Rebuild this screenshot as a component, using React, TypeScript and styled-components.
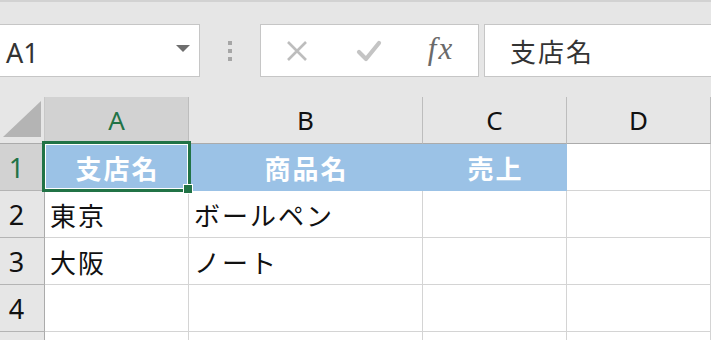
import React from 'react';
import styled, { createGlobalStyle } from 'styled-components';

const GlobalStyle = createGlobalStyle`
    html, body {
        margin: 0;
        padding: 0;
        background: #e6e6e6;
        overflow: hidden;
    }
    body {
        font-family: 'Noto Sans', 'Noto Sans CJK JP', sans-serif;
    }
`;

const Page = styled.div`
    width: 711px;
    height: 340px;
    overflow: hidden;
    box-sizing: border-box;
    border-top: 2px solid #d2d2d2;
    background: #e6e6e6;
`;

const Toolbar = styled.div`
    display: flex;
    height: 53px;
    margin: 22px -2px 20px -1px;
`;

const NameBox = styled.div`
    width: 201px;
    box-sizing: border-box;
    background: #fff;
    border: 1px solid #c6c6c6;
    display: flex;
    align-items: center;
    justify-content: space-between;
    padding: 4px 9px 0 6px;
    font-size: 27px;
    color: #333;
`;

const Arrow = styled.span`
    width: 0;
    height: 0;
    margin-top: -8px;
    border-left: 7px solid transparent;
    border-right: 7px solid transparent;
    border-top: 7px solid #6e6e6e;
`;

const Grip = styled.div`
    width: 60px;
    display: flex;
    flex-direction: column;
    align-items: center;
    justify-content: center;
    gap: 4px;
`;

const Dot = styled.span`
    width: 4px;
    height: 4px;
    background: #a6a6a6;
`;

const FxBox = styled.div`
    width: 219px;
    box-sizing: border-box;
    background: #fff;
    border: 1px solid #c6c6c6;
    display: flex;
`;

const Slot = styled.div`
    width: 72px;
    display: flex;
    align-items: center;
    justify-content: center;
`;

const Fx = styled.span`
    font-family: 'Liberation Serif', serif;
    font-style: italic;
    font-size: 31px;
    letter-spacing: 2px;
    color: #6a6a6a;
    margin-top: -3px;
`;

const FormulaBar = styled.div`
    flex: 1;
    margin-left: 5px;
    background: #fff;
    border: 1px solid #c6c6c6;
    display: flex;
    align-items: center;
    padding-left: 25px;
    font-family: 'Noto Sans CJK JP', sans-serif;
    font-size: 26px;
    letter-spacing: 2px;
    color: #333;
`;

const Sheet = styled.div`
    display: grid;
    grid-template-columns: 45px 144px 234px 144px 144px;
    grid-auto-rows: 47px;
    background: #fff;
`;

const Corner = styled.div`
    box-sizing: border-box;
    background: #e6e6e6;
    border-right: 1px solid #c8c8c8;
    border-bottom: 1px solid #ababab;
    svg {
        display: block;
    }
`;

const ColHeader = styled.div<{ $selected?: boolean }>`
    box-sizing: border-box;
    background: ${(p) => (p.$selected ? '#d2d2d2' : '#e6e6e6')};
    color: ${(p) => (p.$selected ? '#217346' : '#111')};
    border-right: 1px solid #bdbdbd;
    border-bottom: 1px solid #ababab;
    display: flex;
    align-items: center;
    justify-content: center;
    font-size: 26px;
`;

const RowHeader = styled.div<{ $selected?: boolean }>`
    box-sizing: border-box;
    background: ${(p) => (p.$selected ? '#d2d2d2' : '#e6e6e6')};
    color: ${(p) => (p.$selected ? '#217346' : '#111')};
    border-right: 1px solid #ababab;
    border-bottom: 1px solid #b4b4b4;
    display: flex;
    align-items: center;
    justify-content: center;
    padding-right: 11px;
    font-size: 27px;
`;

const Cell = styled.div<{ $fill?: boolean }>`
    position: relative;
    box-sizing: border-box;
    background: ${(p) => (p.$fill ? '#9bc2e6' : '#fff')};
    border-right: 1px solid ${(p) => (p.$fill ? '#9bc2e6' : '#d4d4d4')};
    border-bottom: 1px solid ${(p) => (p.$fill ? '#9bc2e6' : '#d4d4d4')};
    display: flex;
    align-items: center;
    justify-content: ${(p) => (p.$fill ? 'center' : 'flex-start')};
    padding-left: ${(p) => (p.$fill ? '2px' : '5px')};
    font-family: 'Noto Sans CJK JP', sans-serif;
    font-size: 26px;
    letter-spacing: 2px;
    font-weight: ${(p) => (p.$fill ? 700 : 400)};
    color: ${(p) => (p.$fill ? '#fff' : '#111')};
    white-space: nowrap;
`;

const Selection = styled.div`
    position: absolute;
    top: -3px;
    left: -3px;
    right: -3px;
    bottom: -2px;
    border: 3px solid #217346;
    box-shadow: inset 0 0 0 1px #fff;
    pointer-events: none;
    z-index: 2;
`;

const Handle = styled.span`
    position: absolute;
    right: -5px;
    bottom: -4px;
    width: 10px;
    height: 10px;
    box-sizing: border-box;
    background: #217346;
    border: 1px solid #fff;
    z-index: 3;
`;

const columns = ['A', 'B', 'C', 'D'];

// the last row is only a sliver at the bottom edge, its number is not in view
const rows: { cells: string[]; fill?: boolean; label?: string }[] = [
    { label: '1', cells: ['支店名', '商品名', '売上', ''], fill: true },
    { label: '2', cells: ['東京', 'ボールペン', '', ''] },
    { label: '3', cells: ['大阪', 'ノート', '', ''] },
    { label: '4', cells: ['', '', '', ''] },
    { cells: ['', '', '', ''] },
];

const fillCols = 3; // header fill runs A..C

export default function App() {
    return (
        <Page>
            <GlobalStyle />
            <Toolbar>
                <NameBox>
                    <span>A1</span>
                    <Arrow />
                </NameBox>
                <Grip>
                    <Dot />
                    <Dot />
                    <Dot />
                </Grip>
                <FxBox>
                    <Slot>
                        <svg width="22" height="20" viewBox="0 0 22 20">
                            <path d="M2 1 L20 19 M20 1 L2 19" stroke="#bdbdbd" strokeWidth="2.6" fill="none" />
                        </svg>
                    </Slot>
                    <Slot>
                        <svg width="26" height="22" viewBox="0 0 26 22">
                            <path
                                d="M3 12 L10 19 L23 3"
                                stroke="#c4c4c4"
                                strokeWidth="4.2"
                                strokeLinecap="round"
                                strokeLinejoin="round"
                                fill="none"
                            />
                        </svg>
                    </Slot>
                    <Slot>
                        <Fx>fx</Fx>
                    </Slot>
                </FxBox>
                <FormulaBar>支店名</FormulaBar>
            </Toolbar>
            <Sheet>
                <Corner>
                    <svg width="44" height="46" viewBox="0 0 44 46">
                        <polygon points="3,40 41,4 41,40" fill="#b4b4b4" />
                    </svg>
                </Corner>
                {columns.map((c, i) => (
                    <ColHeader key={c} $selected={i === 0}>
                        {c}
                    </ColHeader>
                ))}
                {rows.map((r, ri) => (
                    <React.Fragment key={ri}>
                        <RowHeader $selected={ri === 0}>{r.label}</RowHeader>
                        {r.cells.map((v, ci) => (
                            <Cell key={ci} $fill={r.fill && ci < fillCols}>
                                {v}
                                {ri === 0 && ci === 0 && (
                                    <>
                                        <Selection />
                                        <Handle />
                                    </>
                                )}
                            </Cell>
                        ))}
                    </React.Fragment>
                ))}
            </Sheet>
        </Page>
    );
}
